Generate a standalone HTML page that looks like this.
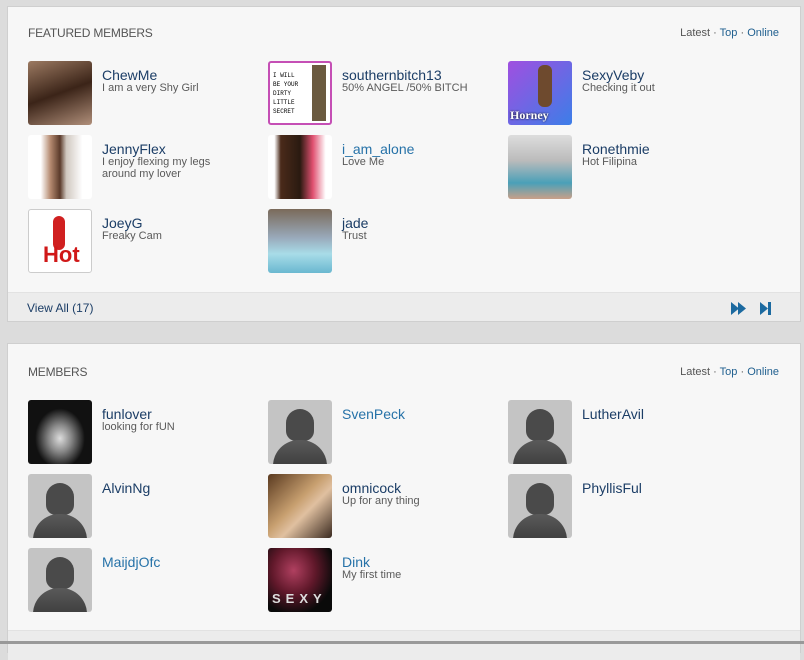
<!DOCTYPE html>
<html><head><style>
*{margin:0;padding:0;box-sizing:border-box}
body{width:804px;height:644px;overflow:hidden;background:#dcdcdc;font-family:"Liberation Sans",sans-serif;position:relative}
.panel{position:absolute;left:7px;width:794px;background:#f7f7f7;border:1px solid #cfcfcf}
.h{position:absolute;left:20px;font-size:12px;color:#555;letter-spacing:-0.2px}
.tabs{position:absolute;right:21px;font-size:11px;color:#555}
.tabs b{font-weight:normal;color:#1f5f8f}
.m{position:absolute;width:230px;height:64px}
.p{position:absolute;left:0;top:0;width:64px;height:64px;border-radius:3px;overflow:hidden}
.n{position:absolute;left:74px;top:6px;font-size:14px;color:#1b3d66;white-space:nowrap}
.n.b{color:#2672a8}
.d{position:absolute;left:74px;top:21px;font-size:11px;line-height:12px;color:#5a5a5a;width:140px}
.foot{position:absolute;left:0;right:0;background:#ececec;border-top:1px solid #e2e2e2}
</style></head><body>

<div class="panel" style="top:6px;height:316px">
 <div class="h" style="top:19px">FEATURED MEMBERS</div>
 <div class="tabs" style="top:20px">Latest · <b>Top</b> · <b>Online</b></div>

 <div class="m" style="left:20px;top:54px"><div class="p" style="background:linear-gradient(160deg,#9c7a62,#3b2418 50%,#b08f7a)"></div><div class="n">ChewMe</div><div class="d">I am a very Shy Girl</div></div>
 <div class="m" style="left:260px;top:54px"><div class="p" style="background:#fff;border:2px solid #c54fb5"><div style="position:absolute;right:4px;top:2px;width:14px;height:56px;background:#6b5a40"></div><div style="font:6px 'Liberation Mono';position:absolute;left:3px;top:8px;line-height:9px">I WILL<br>BE YOUR<br>DIRTY<br>LITTLE<br>SECRET</div></div><div class="n">southernbitch13</div><div class="d">50% ANGEL /50% BITCH</div></div>
 <div class="m" style="left:500px;top:54px"><div class="p" style="background:linear-gradient(135deg,#a04fe0,#3c7ee8)"><div style="position:absolute;left:30px;top:4px;width:14px;height:42px;background:#6e4a2e;border-radius:6px"></div><div style="position:absolute;left:2px;bottom:2px;font:bold 12px 'Liberation Serif';color:#fff;text-shadow:0 0 2px #000">Horney</div></div><div class="n">SexyVeby</div><div class="d">Checking it out</div></div>

 <div class="m" style="left:20px;top:128px"><div class="p" style="background:linear-gradient(90deg,#fff 20%,#b58a70 35%,#5a3a2a 50%,#d0c8c0 60%,#fff 85%)"></div><div class="n">JennyFlex</div><div class="d">I enjoy flexing my legs around my lover</div></div>
 <div class="m" style="left:260px;top:128px"><div class="p" style="background:linear-gradient(90deg,#fff,#fff 10%,#4a2a1a 20%,#2a1a10 50%,#e05070 70%,#fff 90%)"></div><div class="n b">i_am_alone</div><div class="d">Love Me</div></div>
 <div class="m" style="left:500px;top:128px"><div class="p" style="background:linear-gradient(180deg,#ddd 0,#bbb 40%,#4aa0b8 75%,#c9a088)"></div><div class="n">Ronethmie</div><div class="d">Hot Filipina</div></div>

 <div class="m" style="left:20px;top:202px"><div class="p" style="background:#fff;border:1px solid #ccc"><div style="position:absolute;left:24px;top:6px;width:12px;height:34px;background:#d02020;border-radius:6px"></div><div style="position:absolute;left:14px;bottom:4px;font:bold 22px 'Liberation Sans';color:#d01818">Hot</div></div><div class="n">JoeyG</div><div class="d">Freaky Cam</div></div>
 <div class="m" style="left:260px;top:202px"><div class="p" style="background:linear-gradient(180deg,#7a6a5a,#9ab 45%,#a8dce8 70%,#6ab8d0)"></div><div class="n">jade</div><div class="d">Trust</div></div>

 <div class="foot" style="top:285px;height:29px">
  <div style="position:absolute;left:19px;top:8px;font-size:12px;color:#1b3d66">View All (17)</div>
  <svg style="position:absolute;left:723px;top:9px" width="16" height="13"><path d="M0 0L8 6.5L0 13ZM7 0L15 6.5L7 13Z" fill="#1c6aa0"/></svg>
  <svg style="position:absolute;left:752px;top:9px" width="12" height="13"><path d="M0 0L8 6.5L0 13Z" fill="#1c6aa0"/><rect x="8" y="0" width="3" height="13" fill="#1c6aa0"/></svg>
 </div>
</div>

<div class="panel" style="top:343px;height:310px">
 <div class="h" style="top:21px">MEMBERS</div>
 <div class="tabs" style="top:22px">Latest · <b>Top</b> · <b>Online</b></div>

 <div class="m" style="left:20px;top:56px"><div class="p" style="background:radial-gradient(ellipse at 50% 60%,#ddd 0,#888 25%,#111 55%)"></div><div class="n">funlover</div><div class="d">looking for fUN</div></div>
 <div class="m" style="left:260px;top:56px"><div class="p sil"></div><div class="n b">SvenPeck</div></div>
 <div class="m" style="left:500px;top:56px"><div class="p sil"></div><div class="n">LutherAvil</div></div>

 <div class="m" style="left:20px;top:130px"><div class="p sil"></div><div class="n">AlvinNg</div></div>
 <div class="m" style="left:260px;top:130px"><div class="p" style="background:linear-gradient(135deg,#5a3a20,#c8a070 45%,#e0c0a0 60%,#3a2a20)"></div><div class="n">omnicock</div><div class="d">Up for any thing</div></div>
 <div class="m" style="left:500px;top:130px"><div class="p sil"></div><div class="n">PhyllisFul</div></div>

 <div class="m" style="left:20px;top:204px"><div class="p sil"></div><div class="n b">MaijdjOfc</div></div>
 <div class="m" style="left:260px;top:204px"><div class="p" style="background:radial-gradient(ellipse at 40% 35%,#b04060 0,#60182a 40%,#0a0a0a 75%)"><div style="position:absolute;left:4px;bottom:6px;font:bold 13px 'Liberation Sans';color:#ddd;letter-spacing:5px">SEXY</div></div><div class="n b">Dink</div><div class="d">My first time</div></div>

 <div class="foot" style="top:286px;height:30px"></div>
</div>
<div style="position:absolute;left:0;top:641px;width:804px;height:3px;background:#999"></div>

<script></script>
<style>
.sil{background:#c4c4c4}
.sil::before{content:"";position:absolute;left:18px;top:9px;width:28px;height:32px;border-radius:14px 14px 10px 10px;background:#4a4a4a}
.sil::after{content:"";position:absolute;left:5px;top:40px;width:54px;height:30px;border-radius:26px 26px 0 0;background:linear-gradient(#5a5a5a,#3a3a3a)}
</style>
</body></html>
